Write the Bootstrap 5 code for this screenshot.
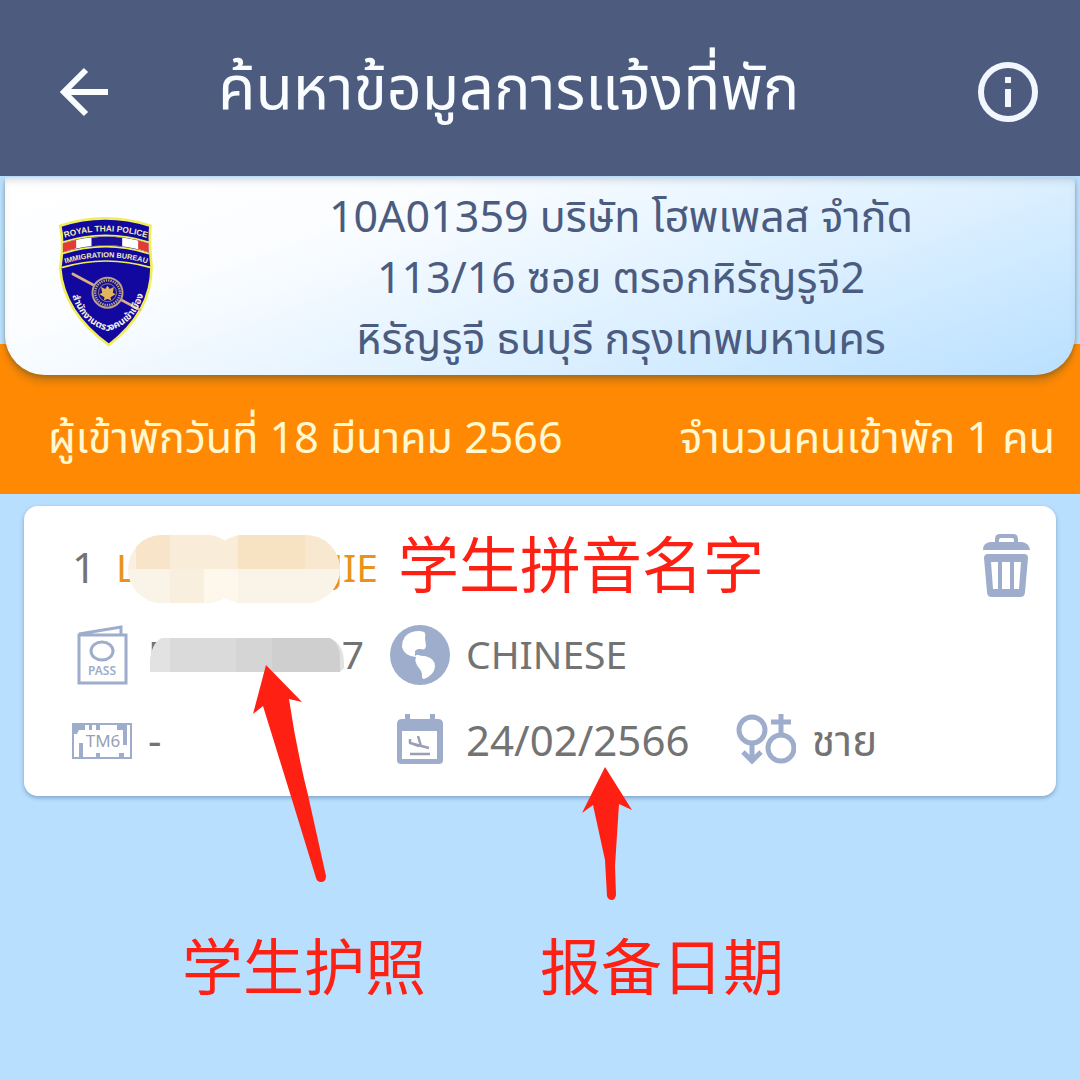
<!DOCTYPE html>
<html lang="th">
<head>
<meta charset="utf-8">
<meta name="viewport" content="width=device-width, initial-scale=1">
<title>ค้นหาข้อมูลการแจ้งที่พัก</title>
<link href="https://cdn.jsdelivr.net/npm/bootstrap@5.3.0/dist/css/bootstrap.min.css" rel="stylesheet">
<style>
  body { background: #b9dfff; color: #737373; font-family: "Noto Sans", "Noto Sans Thai", "Noto Sans CJK SC", sans-serif; font-size: 43px; line-height: 61px; }
  .topbar { background: #4d5c7e; height: 176px; padding: 8px 42px 0 54px; }
  .topbar .btn { line-height: 0; }
  .topbar h1 { font-size: 61px; line-height: 84px; font-weight: 400; color: #fafdff; margin-left: 104px; padding-bottom: 12px; }
  .hotel { margin: 1px 5px 0; min-height: 198px; border-radius: 0 0 40px 40px; color: #4b5c80; padding-left: 53px;
    background: linear-gradient(160deg, #fff 0%, #fbfdff 28%, #dff1ff 62%, #b9e0ff 100%);
    box-shadow: 0 3px 4px rgba(90, 80, 40, .45), 0 10px 5px rgba(120, 100, 50, .18), inset 0 6px 8px -4px rgba(80, 100, 130, .3); z-index: 1; }
  .hotel svg { margin: 12px 14px 0 0; }
  .summary { background: #ff8903; color: #fff8d0; margin-top: -31px; padding: 62px 25px 27px 48px; }
  .guest { margin: 12px 24px 0; padding: 16px 26px 14px 48px; border-radius: 14px; box-shadow: 0 2px 4px rgba(60, 90, 130, .45); font-size: 42px; }
  .guest-head { height: 88px; }
  .guest-name { color: #e8941c; margin-left: 20px; }
  .latin { font-size: 39px; }
  .guest-grid { display: grid; grid-template-columns: 318fr 346fr 294fr; grid-auto-rows: 86px; align-items: center; }
  .cell { display: flex; align-items: center; gap: 16px; }
  .cell > svg { width: 60px; height: 60px; flex: none; margin-top: 4px; }
  .note { color: #ff2014; font-family: "Noto Sans CJK SC", sans-serif; font-size: 61px; line-height: 80px; }
  .guest-head .note { margin-left: 20px; }
  .blur-name { width: 212px; height: 68px; margin: 6px -8px 0; flex: none; }
  .blur-pass { width: 194px; height: 34px; margin: 4px -2px 0 -20px; flex: none; }
  .notes { padding: 128px 0 70px 182px; gap: 114px; }
  .arrow-a { width: 76px; height: 220px; left: 69px; bottom: 121px; }
  .arrow-b { width: 52px; height: 134px; left: 41px; bottom: 104px; }
</style>
</head>
<body>
<header class="topbar d-flex align-items-center">
  <button class="btn p-0 border-0" type="button" aria-label="กลับ">
    <svg width="60" height="60" viewBox="0 0 60 60" fill="none" stroke="#fafdff" stroke-width="6"><path d="M54 30H11M32 8 10 30l22 22"/></svg>
  </button>
  <h1 class="mb-0 text-nowrap">ค้นหาข้อมูลการแจ้งที่พัก</h1>
  <button class="btn p-0 border-0 ms-auto" type="button" aria-label="ข้อมูล">
    <svg width="60" height="60" viewBox="0 0 60 60"><circle cx="30" cy="30" r="27" fill="none" stroke="#f2f7ff" stroke-width="6"/><path fill="#f2f7ff" d="M27 15h6v6h-6zM27 27h6v18h-6z"/></svg>
  </button>
</header>

<main>
  <section class="hotel d-flex align-items-center position-relative">
    <svg width="95" height="130" viewBox="48 36 284 390" role="img" aria-label="Royal Thai Police Immigration Bureau">
      <path d="M54 62Q188 18 325 62Q320 104 328 182Q330 320 200 420Q64 322 54 190Q66 110 54 62Z" fill="#1208a0" stroke="#f2ee5a" stroke-width="8"/>
      <path d="M62 115Q190 74 319 115V142Q190 100 62 142Z" fill="#fff"/>
      <path d="M62 115l40-11v26l-40 12zM319 115l-31-9v26l31 10z" fill="#e23a34"/>
      <path d="M148 98q45-6 92 0v26q-46-6-92 0z" fill="#1a0e9a"/>
      <path d="M60 112Q190 70 321 112M60 146Q190 104 321 146M58 188Q190 148 327 188" fill="none" stroke="#f2ee5a" stroke-width="5"/>
      <path d="M92 207 292 314" stroke="#dcae84" stroke-width="8" stroke-linecap="round"/>
      <circle cx="196" cy="263" r="45" fill="#17108c" stroke="#b9a184" stroke-width="6"/>
      <circle cx="196" cy="263" r="37" fill="none" stroke="#b9a184" stroke-width="7" stroke-dasharray="4 3"/>
      <circle cx="196" cy="263" r="27" fill="none" stroke="#c9b08c" stroke-width="2"/>
      <path d="M196 242l7 10 12-6-3 17 8 5-15 9 2 9-11-4-11 4 2-9-15-9 8-5-3-17 12 6z" fill="#e2b45c"/>
      <defs>
        <path id="arc1" d="M64 100Q190 58 318 100"/>
        <path id="arc2" d="M62 178Q190 136 322 178"/>
        <path id="arc3" d="M84 240Q100 350 196 378Q292 356 310 236"/>
      </defs>
      <g font-family="Liberation Sans, sans-serif" font-weight="700" fill="#f3eeb4" text-anchor="middle">
        <text font-size="25"><textPath href="#arc1" startOffset="50%">ROYAL THAI POLICE</textPath></text>
        <text font-size="22"><textPath href="#arc2" startOffset="50%">IMMIGRATION BUREAU</textPath></text>
        <text font-family="Noto Sans Thai, sans-serif" font-size="29" fill="#f4f0e4"><textPath href="#arc3" startOffset="50%">สำนักงานตรวจคนเข้าเมือง</textPath></text>
      </g>
    </svg>
    <div class="flex-fill text-center">
      <div>10A01359 บริษัท โฮพเพลส จำกัด</div>
      <div>113/16 ซอย ตรอกหิรัญรูจี2</div>
      <div>หิรัญรูจี ธนบุรี กรุงเทพมหานคร</div>
    </div>
  </section>

  <section class="summary d-flex justify-content-between text-nowrap">
    <span>ผู้เข้าพักวันที่ 18 มีนาคม 2566</span>
    <span>จำนวนคนเข้าพัก 1 คน</span>
  </section>

  <article class="guest bg-white">
    <div class="guest-head d-flex align-items-center text-nowrap">
      <span>1</span>
      <span class="guest-name latin d-flex align-items-center"><span>L</span>
        <svg class="blur-name position-relative" viewBox="0 0 212 68" aria-hidden="true">
          <clipPath id="pills"><rect width="112" height="68" rx="34"/><rect x="82" width="130" height="68" rx="34"/></clipPath>
          <g clip-path="url(#pills)"><path fill="#faf0df" d="M0 0h212v68H0z"/><path fill="#f8e5c9" d="M8 0h34v34H8z"/><path fill="#f9ecd8" d="M42 0h68v34H42z"/><path fill="#f7e2c2" d="M110 0h67v34h-67z"/><path fill="#f9e8d0" d="M177 0h35v34h-35z"/><path fill="#faf3e7" d="M0 34h212v34H0z"/><path fill="#f9efde" d="M42 34h34v34H42z"/><path fill="#fdf7ec" d="M76 34h34v34H76z"/></g>
        </svg>
        <span>JIE</span>
      </span>
      <span class="note align-self-start">学生拼音名字</span>
      <button class="btn p-0 border-0 ms-auto lh-1" type="button" aria-label="ลบ">
        <svg class="d-block" width="48" height="64" viewBox="0 0 48 64" fill="#9dadcb"><path fill-rule="evenodd" d="M1 16q0-7 7-8h5V5q0-5 5-5h13q5 0 5 5v3h4q7 1 8 8zM17 8h15V6q0-2-2-2H19q-2 0-2 2z"/><path fill-rule="evenodd" d="M6 20h36q4 0 4 4l-3 34q0 5-5 5H10q-5 0-5-5L2 24q0-4 4-4zM9 28l2 27h5V28zM20 28v27h8V28zM32 28v27h5l2-27z"/></svg>
      </button>
    </div>
    <div class="guest-grid text-nowrap">
      <div class="cell">
        <svg viewBox="0 0 60 60" role="img" aria-label="Passport"><path fill="none" stroke="#9dadcb" stroke-width="3" d="M7 10h47v48H7zM7 9 49 2v8"/><ellipse cx="30" cy="26" rx="11" ry="9" fill="none" stroke="#9dadcb" stroke-width="3"/><text x="30" y="50" text-anchor="middle" font-family="Noto Sans" font-weight="600" font-size="12" fill="#9dadcb">PASS</text></svg>
        <span class="latin d-flex align-items-center"><span>E</span>
          <svg class="blur-pass position-relative" viewBox="0 0 194 34" aria-hidden="true"><path fill="#e2e2e2" d="M0 34V22Q2 4 12 0h168q14 6 14 26v4l-4 4z"/><path fill="#dadada" d="M20 0h66v34H20z"/><path fill="#d5d5d5" d="M86 0h36v34H86z"/><path fill="#cfcfcf" d="M122 0h58q10 6 10 20v14h-68z"/></svg>
          <span>7</span>
        </span>
      </div>
      <div class="cell">
        <svg viewBox="0 0 60 60" role="img" aria-label="Nationality"><circle cx="30" cy="30" r="30" fill="#9dadcb"/><path fill="#fff" d="M34 7Q36 8 35 13L36 21Q35 26 31 24 26 24 26 28 28 31 35 31 46 34 45 42 44 50 34 54 32 54 32 51 32 46 29 43 24 37 26 32 14 31 12 22 12 10 22 7 29 5 34 7Z"/><path fill="#9dadcb" d="M25 26q4-4 8 0l3 3q-3 3-6 1-3-1-5 1z"/></svg>
        <span class="latin">CHINESE</span>
      </div>
      <div></div>
      <div class="cell">
        <svg viewBox="0 0 60 60" role="img" aria-label="TM6"><path fill="none" stroke="#9dadcb" stroke-width="2" d="M1 13h58v34H1z"/><path fill="#9dadcb" d="M1 13h12v6H7l-2 4H1zM17 13h3v6h-3zM24 13h4v6h-4zM45 13h10v21h-4V19h-6zM7 32h4v15H7zM24 42h4v6h-4zM47 42h5v6h-5z"/><text x="31" y="36" text-anchor="middle" font-family="Noto Sans" font-size="17" fill="#9a9fb5">TM6</text></svg>
        <span>-</span>
      </div>
      <div class="cell">
        <svg viewBox="0 0 60 60" role="img" aria-label="Date"><path fill="#9dadcb" fill-rule="evenodd" d="M15 3h5v5h20V3h5v5h3q5 0 5 5v36q0 4-4 4H11q-4 0-4-4V13q0-5 5-5h3zM12 20v28h35V20z"/><path fill="none" stroke="#9a9fb5" stroke-width="2.500" stroke-linejoin="round" d="M20 28v4l19 5M23 33l6 2M31 35l-3-10M20 43h20"/></svg>
        <span>24/02/2566</span>
      </div>
      <div class="cell">
        <svg viewBox="0 0 60 60" role="img" aria-label="Gender" fill="none" stroke="#9dadcb" stroke-width="5"><circle cx="16" cy="19" r="13"/><circle cx="45" cy="37" r="13"/><path d="M16 32v18M7 41l9 9 9-9M45 24V3M35 11h20"/></svg>
        <span>ชาย</span>
      </div>
    </div>
  </article>

  <div class="notes d-flex">
    <div class="note position-relative">学生护照
      <svg class="arrow-a position-absolute" viewBox="0 0 76 220" fill="#ff2014" aria-hidden="true"><path d="M15 2 51 39 38 36Q45 84 57 132L75 213Q75 219 70 219 66 219 65 215L42 140 12 43 2 51Z"/></svg>
    </div>
    <div class="note position-relative">报备日期
      <svg class="arrow-b position-absolute" viewBox="0 0 52 134" fill="#ff2014" aria-hidden="true"><path d="M24 1 51 44 38 38 34 100 35 129Q34 134 31 134 27 134 26 130L24 94 12 39 1 47Z"/></svg>
    </div>
  </div>
</main>
<script src="https://cdn.jsdelivr.net/npm/bootstrap@5.3.0/dist/js/bootstrap.bundle.min.js"></script>
</body>
</html>
